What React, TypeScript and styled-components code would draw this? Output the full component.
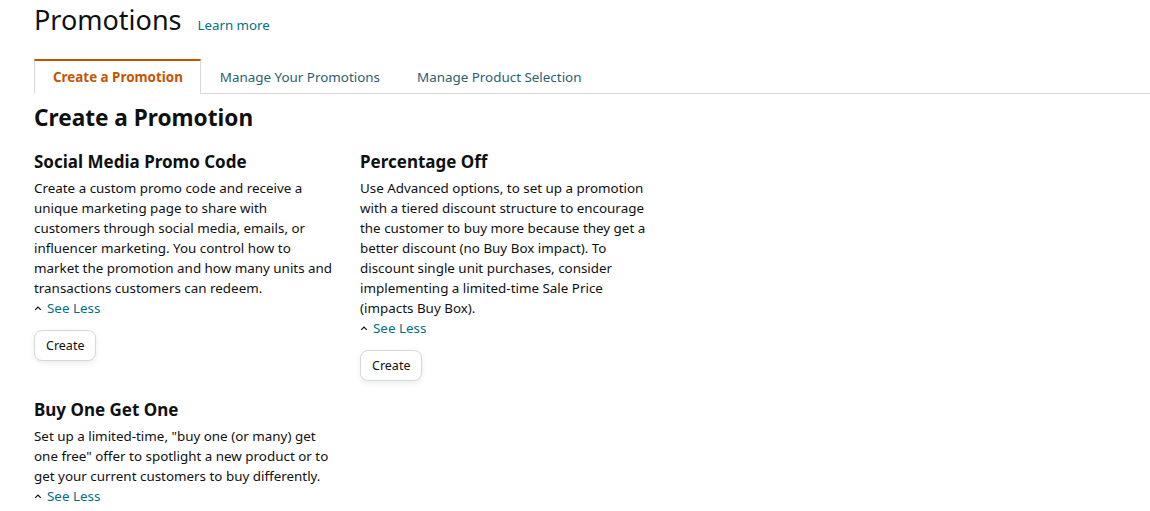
import React from "react";
import styled, { createGlobalStyle } from "styled-components";

const Global = createGlobalStyle`
  html, body { margin: 0; padding: 0; background: #fff; }
  body { font-family: "Noto Sans", "Open Sans", Arial, sans-serif; color: #0f1111; }
`;

const Page = styled.div`
  padding: 0 0 0 34px;
`;

const TitleRow = styled.div`
  display: flex;
  align-items: baseline;
  gap: 16px;
  height: 40px;
`;

const Title = styled.h1`
  margin: 0;
  font-size: 27px;
  font-weight: 400;
  line-height: 40px;
  color: #0f1111;
`;

const Link = styled.a`
  color: #007185;
  font-size: 13.3px;
  text-decoration: none;
  cursor: pointer;
`;

const Tabs = styled.div`
  display: flex;
  margin-top: 19px;
  border-bottom: 1px solid #d5d9d9;
  height: 34px;
`;

const Tab = styled.div<{ $active?: boolean }>`
  display: flex;
  align-items: center;
  padding: 0 17px 0 18px;
  font-size: 13.4px;
  box-sizing: border-box;
  height: 35px;
  color: ${(p) => (p.$active ? "#c45500" : "#2a6171")};
  font-weight: ${(p) => (p.$active ? 700 : 400)};
  background: ${(p) => (p.$active ? "#fff" : "transparent")};
  border-top: 2px solid ${(p) => (p.$active ? "#c45500" : "transparent")};
  border-left: 1px solid ${(p) => (p.$active ? "#d5d9d9" : "transparent")};
  border-right: 1px solid ${(p) => (p.$active ? "#d5d9d9" : "transparent")};
  border-bottom: 1px solid ${(p) => (p.$active ? "#fff" : "transparent")};
`;

const SectionHeading = styled.h2`
  margin: 8px 0 0;
  font-size: 22.6px;
  font-weight: 700;
  line-height: 32px;
`;

const Grid = styled.div`
  display: grid;
  grid-template-columns: 302px 290px;
  column-gap: 24px;
  row-gap: 17px;
  margin-top: 16px;
`;

const Card = styled.div`
  display: flex;
  flex-direction: column;
  align-items: flex-start;
`;

const CardTitle = styled.h3`
  margin: 0;
  font-size: 17px;
  font-weight: 700;
  line-height: 24px;
`;

const CardBody = styled.p`
  margin: 4px 0 0;
  font-size: 13.4px;
  line-height: 20px;
`;

const SeeLess = styled.a`
  display: flex;
  align-items: center;
  gap: 5px;
  font-size: 13.4px;
  line-height: 20px;
  color: #007185;
  cursor: pointer;
`;

const Caret = styled.span`
  display: inline-flex;
`;

const Button = styled.button`
  margin-top: 12px;
  height: 31px;
  padding: 0 11px;
  font-family: inherit;
  font-size: 12.5px;
  color: #0f1111;
  background: #fff;
  border: 1px solid #d5d9d9;
  border-radius: 8px;
  box-shadow: 0 2px 5px rgba(213, 217, 217, 0.5);
  cursor: pointer;
`;

const cards = [
  {
    title: "Social Media Promo Code",
    body: "Create a custom promo code and receive a unique marketing page to share with customers through social media, emails, or influencer marketing. You control how to market the promotion and how many units and transactions customers can redeem.",
    button: true,
  },
  {
    title: "Percentage Off",
    body: "Use Advanced options, to set up a promotion with a tiered discount structure to encourage the customer to buy more because they get a better discount (no Buy Box impact). To discount single unit purchases, consider implementing a limited-time Sale Price (impacts Buy Box).",
    button: true,
  },
  {
    title: "Buy One Get One",
    body: "Set up a limited-time, \"buy one (or many) get one free\" offer to spotlight a new product or to get your current customers to buy differently.",
    button: false,
  },
];

export default function App() {
  return (
    <Page>
      <Global />
      <TitleRow>
        <Title>Promotions</Title>
        <Link>Learn more</Link>
      </TitleRow>
      <Tabs>
        <Tab $active>Create a Promotion</Tab>
        <Tab>Manage Your Promotions</Tab>
        <Tab>Manage Product Selection</Tab>
      </Tabs>
      <SectionHeading>Create a Promotion</SectionHeading>
      <Grid>
        {cards.map((c) => (
          <Card key={c.title}>
            <CardTitle>{c.title}</CardTitle>
            <CardBody>{c.body}</CardBody>
            <SeeLess>
              <Caret>
                <svg width="8" height="6" viewBox="0 0 8 6">
                  <path d="M1.2 4.8 L4 2 L6.8 4.8" fill="none" stroke="#0f1111" strokeWidth="1.2" />
                </svg>
              </Caret>
              See Less
            </SeeLess>
            {c.button && <Button>Create</Button>}
          </Card>
        ))}
      </Grid>
    </Page>
  );
}
